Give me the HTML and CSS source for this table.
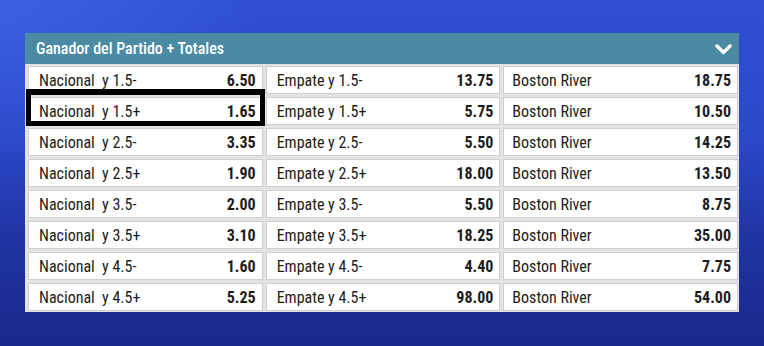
FILE: index.html
```html
<!DOCTYPE html>
<html lang="es">
<head>
<meta charset="utf-8">
<title>Ganador del Partido + Totales</title>
<link rel="stylesheet" href="styles.css">
</head>
<body>
<div class="stage">
  <section class="market">
    <header class="market-head">
      <span class="market-title">Ganador del Partido + Totales</span>
      <svg class="chev" width="17" height="11" viewBox="0 0 17 11"><polyline points="2,2 8.5,8.5 15,2" fill="none" stroke="#fff" stroke-width="3.4" stroke-linecap="round" stroke-linejoin="round"/></svg>
    </header>
    <div class="grid">
      <div class="cell"><span class="lbl">Nacional&nbsp; y 1.5-</span><span class="odd">6.50</span></div>
      <div class="cell"><span class="lbl">Empate y 1.5-</span><span class="odd">13.75</span></div>
      <div class="cell away"><span class="lbl">Boston River</span><span class="odd">18.75</span></div>

      <div class="cell selected"><span class="lbl">Nacional&nbsp; y 1.5+</span><span class="odd">1.65</span></div>
      <div class="cell"><span class="lbl">Empate y 1.5+</span><span class="odd">5.75</span></div>
      <div class="cell away"><span class="lbl">Boston River</span><span class="odd">10.50</span></div>

      <div class="cell"><span class="lbl">Nacional&nbsp; y 2.5-</span><span class="odd">3.35</span></div>
      <div class="cell"><span class="lbl">Empate y 2.5-</span><span class="odd">5.50</span></div>
      <div class="cell away"><span class="lbl">Boston River</span><span class="odd">14.25</span></div>

      <div class="cell"><span class="lbl">Nacional&nbsp; y 2.5+</span><span class="odd">1.90</span></div>
      <div class="cell"><span class="lbl">Empate y 2.5+</span><span class="odd">18.00</span></div>
      <div class="cell away"><span class="lbl">Boston River</span><span class="odd">13.50</span></div>

      <div class="cell"><span class="lbl">Nacional&nbsp; y 3.5-</span><span class="odd">2.00</span></div>
      <div class="cell"><span class="lbl">Empate y 3.5-</span><span class="odd">5.50</span></div>
      <div class="cell away"><span class="lbl">Boston River</span><span class="odd">8.75</span></div>

      <div class="cell"><span class="lbl">Nacional&nbsp; y 3.5+</span><span class="odd">3.10</span></div>
      <div class="cell"><span class="lbl">Empate y 3.5+</span><span class="odd">18.25</span></div>
      <div class="cell away"><span class="lbl">Boston River</span><span class="odd">35.00</span></div>

      <div class="cell"><span class="lbl">Nacional&nbsp; y 4.5-</span><span class="odd">1.60</span></div>
      <div class="cell"><span class="lbl">Empate y 4.5-</span><span class="odd">4.40</span></div>
      <div class="cell away"><span class="lbl">Boston River</span><span class="odd">7.75</span></div>

      <div class="cell"><span class="lbl">Nacional&nbsp; y 4.5+</span><span class="odd">5.25</span></div>
      <div class="cell"><span class="lbl">Empate y 4.5+</span><span class="odd">98.00</span></div>
      <div class="cell away"><span class="lbl">Boston River</span><span class="odd">54.00</span></div>
    </div>
  </section>
</div>
</body>
</html>
```
FILE: styles.css
```css
html, body {
  margin: 0;
  padding: 0;
}
body {
  width: 764px;
  height: 346px;
  overflow: hidden;
  font-family: "Roboto Condensed", "Roboto", "Liberation Sans", sans-serif;
  background:
    radial-gradient(ellipse 260px 160px at 0% 0%, rgba(70,110,240,0.55), rgba(70,110,240,0) 100%),
    linear-gradient(180deg, #2f50d5 0%, #2b48c8 40%, #1f329f 72%, #19298a 100%);
}
.stage {
  padding: 33px 25px 0 25px;
}
.market {
  width: 714px;
  background: #e3e3e3;
}
.market-head {
  height: 31px;
  background: #4a8ba3;
  display: flex;
  align-items: center;
  justify-content: space-between;
  padding: 0 7px 0 11px;
  box-sizing: border-box;
}
.market-title {
  color: #fff;
  font-size: 16px;
  font-weight: 500;
}
.chev {
  display: block;
  margin-top: 1px;
}
.grid {
  display: grid;
  grid-template-columns: repeat(3, 1fr);
  grid-auto-rows: 28px;
  column-gap: 3px;
  row-gap: 3px;
  padding: 2px 1px 1px 3px;
}
.cell {
  position: relative;
  background: #fff;
  border: 1px solid #cfcfcf;
  display: flex;
  align-items: center;
  justify-content: space-between;
  padding: 0 6px 0 10px;
  color: #1c1c1c;
  font-size: 16px;
}
.cell.away {
  padding-left: 8px;
}
.odd {
  font-weight: 700;
}
.selected::after {
  content: "";
  position: absolute;
  top: -9px;
  bottom: -2px;
  left: -3px;
  right: -3px;
  border: 5px solid #000;
  border-top-width: 6px;
  pointer-events: none;
}
```
